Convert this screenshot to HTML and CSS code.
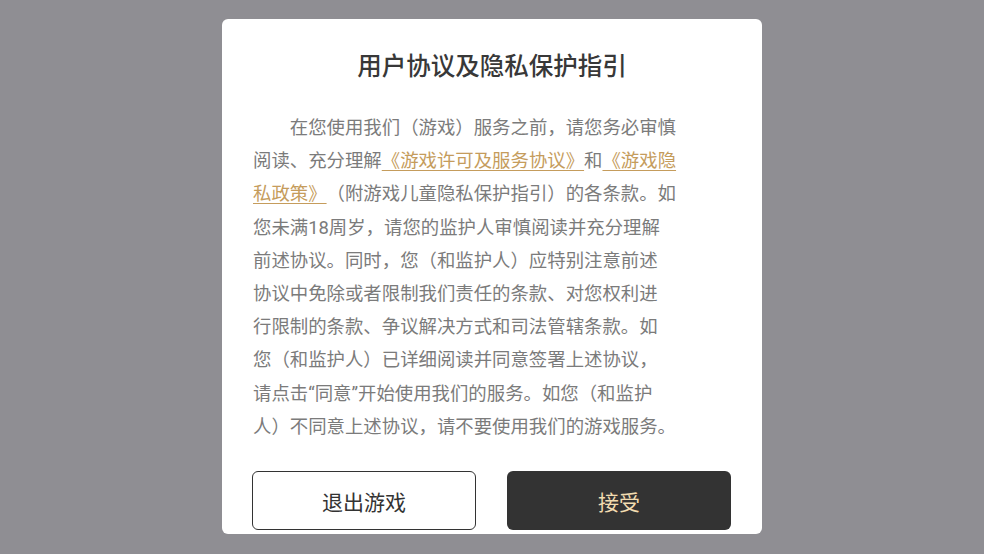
FILE: index.html
```html
<!DOCTYPE html>
<html lang="zh-CN">
<head>
    <meta charset="UTF-8">
    <meta name="viewport" content="width=device-width, initial-scale=1.0">
    <title>用户协议及隐私保护指引</title>
    <link rel="stylesheet" href="styles.css">
</head>
<body>
    <div class="overlay">
        <div class="dialog">
            <h2 class="dialog-title">用户协议及隐私保护指引</h2>
            <p class="dialog-text">在您使用我们（游戏）服务之前，请您务必审慎<br>阅读、充分理解<a href="#">《游戏许可及服务协议》</a>和<a href="#">《游戏隐<br>私政策》</a>（附游戏儿童隐私保护指引）的各条款。如<br>您未满18周岁，请您的监护人审慎阅读并充分理解<br>前述协议。同时，您（和监护人）应特别注意前述<br>协议中免除或者限制我们责任的条款、对您权利进<br>行限制的条款、争议解决方式和司法管辖条款。如<br>您（和监护人）已详细阅读并同意签署上述协议，<br>请点击“同意”开始使用我们的服务。如您（和监护<br>人）不同意上述协议，请不要使用我们的游戏服务。</p>
            <div class="dialog-buttons">
                <button class="btn btn-quit">退出游戏</button>
                <button class="btn btn-accept">接受</button>
            </div>
        </div>
    </div>
</body>
</html>
```

FILE: styles.css
```css
body {
    margin: 0;
    font-family: Roboto, "Noto Sans CJK SC", sans-serif;
    background-color: #8f8e93;
}
.overlay {
    width: 984px;
    height: 554px;
    display: flex;
    justify-content: center;
    align-items: flex-start;
    padding-top: 19px;
    box-sizing: border-box;
    overflow: hidden;
}
.dialog {
    width: 540px;
    height: 515px;
    background: #fff;
    border-radius: 6px;
    padding: 31px 30px 3px 30px;
    box-sizing: border-box;
}
.dialog-title {
    margin: 0 0 27px;
    font-size: 24.5px;
    line-height: 34px;
    font-weight: 500;
    color: #383838;
    text-align: center;
}
.dialog-text {
    margin: 0 0 0 1px;
    font-size: 18.4px;
    line-height: 33.2px;
    color: #7b7b7b;
    text-indent: 2em;
    white-space: nowrap;
    text-spacing-trim: space-all;
}
.dialog-text a {
    color: #c59c5c;
    text-decoration: underline;
    text-underline-offset: 3px;
}
.dialog-buttons {
    display: flex;
    gap: 31px;
    margin-top: 28px;
}
.btn {
    width: 224px;
    height: 59px;
    border-radius: 6px;
    font-family: Roboto, "Noto Sans CJK SC", sans-serif;
    font-size: 21px;
    cursor: pointer;
}
.btn-quit {
    background: #fff;
    color: #333;
    border: 1.5px solid #333;
}
.btn-accept {
    background: #333;
    color: #f2dcb0;
    border: none;
}
```
